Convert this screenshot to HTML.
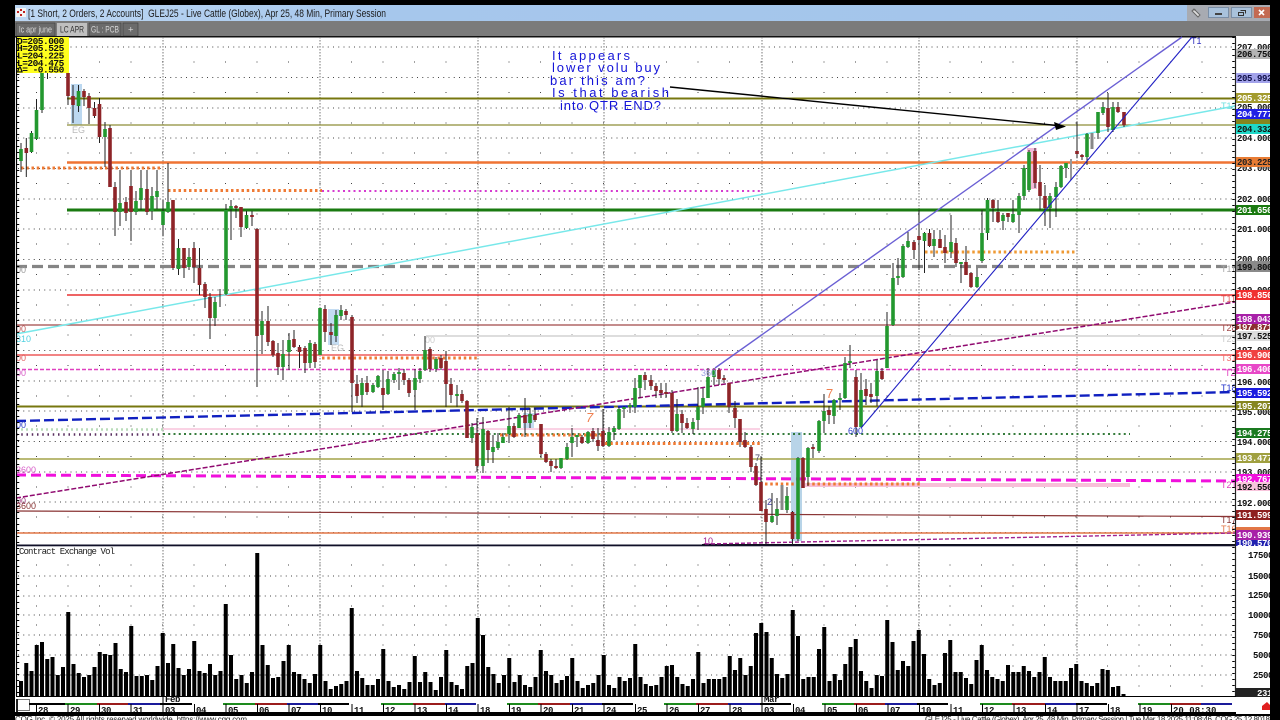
<!DOCTYPE html>
<html>
<head>
<meta charset="utf-8">
<title>GLEJ25 chart</title>
<style>
html,body{margin:0;padding:0;background:#000;width:1280px;height:720px;overflow:hidden}
svg{display:block;position:absolute;left:0;top:0}
text{white-space:pre}
.m{font:bold 9px "Liberation Mono",monospace;letter-spacing:-.4px}
.o{font:bold 9.5px "Liberation Mono",monospace;letter-spacing:-.5px}
.s{font:11px "Liberation Sans",sans-serif}
.t{font:9.5px "Liberation Sans",sans-serif}
.n{font:13px "Liberation Sans",sans-serif;fill:#1414d8}
</style>
</head>
<body>
<svg width="1280" height="720" viewBox="0 0 1280 720" xmlns="http://www.w3.org/2000/svg">
<defs>
<linearGradient id="tb" x1="0" x2="1" y1="0" y2="0"><stop offset="0" stop-color="#bdd7f3"/><stop offset="0.3" stop-color="#a6c7ec"/><stop offset="1" stop-color="#a3c4ea"/></linearGradient>
</defs>
<rect width="1280" height="720" fill="#000"/>
<!-- title bar -->
<rect x="15" y="5" width="1255" height="16" fill="url(#tb)"/>
<rect x="1187" y="5" width="83" height="16" fill="#a8abb2"/>
<rect x="16" y="8" width="10" height="9" fill="#f4f4f4"/>
<path d="M17 11h2v2h-2zM20 9h2v2h-2zM23 11h2v2h-2zM20 14h2v2h-2z" fill="#c02020"/>
<text class="s" x="28" y="17" fill="#1c1c1c" textLength="358" lengthAdjust="spacingAndGlyphs">[1 Short, 2 Orders, 2 Accounts]  GLEJ25 - Live Cattle (Globex), Apr 25, 48 Min, Primary Session</text>
<path d="M1194 9l6 6-2 2-6-6zM1193 10h3" stroke="#666" fill="#ddd"/>
<rect x="1208.5" y="7.5" width="20" height="10" fill="#a9c2dc" stroke="#7a8ea6"/><rect x="1215" y="13" width="7" height="2" fill="#444"/>
<rect x="1231.5" y="7.5" width="20" height="10" fill="#a9c2dc" stroke="#7a8ea6"/><path d="M1238.5 12.5h5v3h-5zM1240.5 10.5h5v3" fill="none" stroke="#333"/>
<rect x="1254" y="7" width="16" height="11" fill="#c36a52"/><path d="M1259 10l5 5M1264 10l-5 5" stroke="#fff" stroke-width="1.6"/>
<!-- tab bar -->
<rect x="15" y="21" width="1255" height="15" fill="#7b7b7b"/>
<rect x="16" y="23" width="39" height="13" fill="#6b6b6b" stroke="#333" stroke-width=".5"/>
<text class="t" x="19" y="32.5" fill="#d8d8d8" textLength="33" lengthAdjust="spacingAndGlyphs">lc apr june</text>
<rect x="57" y="23" width="30" height="13" fill="#bfbfbf"/>
<text class="t" x="60" y="32.5" fill="#333" textLength="24" lengthAdjust="spacingAndGlyphs">LC APR</text>
<rect x="89" y="23" width="32" height="13" fill="#6b6b6b" stroke="#333" stroke-width=".5"/>
<text class="t" x="91" y="32.5" fill="#d8d8d8" textLength="28" lengthAdjust="spacingAndGlyphs">GL : PCB</text>
<rect x="123" y="23" width="15" height="13" fill="#6b6b6b" stroke="#333" stroke-width=".5"/>
<text class="t" x="128" y="32.5" fill="#d8d8d8">+</text>
<!-- chart background -->
<rect x="15" y="36" width="1255" height="680" fill="#fff"/>
<rect x="15" y="36" width="1221" height="1.5" fill="#111"/>
<!-- grid -->
<g fill="none" stroke="#444" stroke-width="1">
<path stroke-dasharray="1 4.25" d="M18 47H1232M18 77.5H1232M18 108H1232M18 138H1232M18 168.5H1232M18 199H1232M18 229H1232M18 259.5H1232M18 290H1232M18 320H1232M18 350.5H1232M18 381H1232M18 411H1232M18 441.5H1232M18 472H1232M18 502H1232M18 532.5H1232M18 576H1232M18 596H1232M18 615H1232M18 635H1232M18 655H1232M18 675H1232"/>
<path stroke-dasharray="1 30.5" d="M36 62H1232M36 92.5H1232M36 123H1232M36 153H1232M36 183.5H1232M36 214H1232M36 244H1232M36 274.5H1232M36 305H1232M36 335H1232M36 365.5H1232M36 396H1232M36 426H1232M36 456.5H1232M36 487H1232M36 517H1232M36 565H1232M36 586H1232M36 606H1232M36 625H1232M36 645H1232M36 666H1232M36 686H1232"/>
<path stroke="#777" stroke-dasharray="1.5 1.5" d="M163 37V696M320 37V696M478 37V696M604 37V696M762 37V696M919 37V696M1077 37V696"/>
</g>
<!-- highlight boxes -->
<rect x="71" y="84" width="11" height="41" fill="#bcd8f0"/>
<rect x="328" y="309" width="11" height="36" fill="#c4dcf2"/>
<rect x="523" y="413" width="11" height="15" fill="#c4dcf2"/>
<rect x="791" y="432" width="11" height="109" fill="#b8d4e8"/>
<rect x="1027" y="148" width="10" height="41" fill="#f3b9d8"/>
<!-- level lines -->
<g fill="none">
<path d="M67 98.5H1235" stroke="#77770f" stroke-width="2"/>
<path d="M67 125H1235" stroke="#8e8e38" stroke-width="1.2"/>
<path d="M67 162.5H1235" stroke="#ef7434" stroke-width="2.4"/>
<path d="M67 210H1235" stroke="#1a7a10" stroke-width="3"/>
<path d="M16 266.5H1235" stroke="#858585" stroke-width="3.2" stroke-dasharray="11 5"/>
<path d="M67 295H1235" stroke="#e83030" stroke-width="1.5"/>
<path d="M16 325H1235" stroke="#a04848" stroke-width="1.2"/>
<path d="M426 336H1235" stroke="#dddddd" stroke-width="2"/>
<path d="M16 355H1235" stroke="#f28484" stroke-width="2"/>
<path d="M16 369.5H1235" stroke="#e040c0" stroke-width="1.6" stroke-dasharray="4 2"/>
<path d="M16 406.5H1235" stroke="#77770f" stroke-width="2"/>
<path d="M16 459H1235" stroke="#a4a448" stroke-width="1.6"/>
<path d="M16 429.5H163" stroke="#b8dcb8" stroke-width="2.5" stroke-dasharray="2 3"/>
<path d="M163 429H760" stroke="#f8c4dc" stroke-width="1.6"/>
<path d="M16 434.5H163" stroke="#5a3060" stroke-width="2.5" stroke-dasharray="1.5 3.75"/>
<path d="M163 434H1130" stroke="#1a6a20" stroke-width="1.8" stroke-dasharray="2 3.25"/>
<path d="M16 511L1235 516.5" stroke="#8a3535" stroke-width="1.2"/>
<path d="M16 533H1235" stroke="#e27646" stroke-width="1.6"/>
<path d="M702 544.5H1235" stroke="#111" stroke-width="1"/>
<path d="M805 485H1130" stroke="#f8c0d8" stroke-width="4"/>
<path d="M16 475L1235 481" stroke="#f010dc" stroke-width="3" stroke-dasharray="10 5"/>
<path d="M16 421L1235 392" stroke="#1020c0" stroke-width="2.4" stroke-dasharray="10 4"/>
<path d="M16 498L1235 302" stroke="#900a70" stroke-width="1.5" stroke-dasharray="5 2"/>
<path d="M16 334L1235 106" stroke="#78e8ea" stroke-width="1.5"/>
<path d="M705 544L1235 533" stroke="#a02090" stroke-width="1.4" stroke-dasharray="4 2"/>
<!-- orange/pink dotted -->
<path d="M21 168H163" stroke="#ef7a34" stroke-width="3" stroke-dasharray="2.5 2.75"/>
<path d="M168 190.5H322" stroke="#ef7a34" stroke-width="3" stroke-dasharray="2.5 2.75"/>
<path d="M322 191H760" stroke="#d63ad0" stroke-width="2" stroke-dasharray="2 3.25"/>
<path d="M322 358H478" stroke="#ef7a34" stroke-width="3" stroke-dasharray="2.5 2.75"/>
<path d="M500 435H605" stroke="#ef7a34" stroke-width="3" stroke-dasharray="2.5 2.75"/>
<path d="M605 443.5H762" stroke="#ef7a34" stroke-width="3" stroke-dasharray="2.5 2.75"/>
<path d="M765 484H920" stroke="#ef7a34" stroke-width="3" stroke-dasharray="2.5 2.75"/>
<path d="M925 252H1077" stroke="#ef9a34" stroke-width="3" stroke-dasharray="2.5 2.75"/>
<path d="M1077 162.5H1130" stroke="#ef8c50" stroke-width="3" stroke-dasharray="2.5 2.75"/>
</g>
<!-- candle wicks -->
<path fill="none" stroke="#222" stroke-width="1" d="M21 143V172M26.3 138V177M31.5 131V153M36.5 99V140M42 60V113M47.5 73V79M68 73V105M73 85V123M78.5 85V112M84 89V106M89 93V124M94.5 102V118M99.5 98V143M105 122V167M110 125V187M115 182V236M120 170V226M126 197V221M131 170V241M136 191V215M141 170V210M147 170V215M152 187V220M157 170V209M163 200V236M168 163V213M173 200V270M178.5 239V275M184 248V278M189 248V270M194 242V283M199.5 248V295M205 282V308M210 293V339M215 297V326M220 289V307M226 204V295M231 200V240M236 205V218M241 207V237M246.5 211V229M252 211V226M257 228V387M262 311V354M268 306V346M273 340V357M278 343V375M283 340V380M289 333V370M294 330V348M299.5 345V368M305 346V373M310 340V368M315 342V368M320 308V355M325 305V342M331 323V345M336 310V342M341 305V320M346 309V320M352 315V412M357 375V403M362 378V407M367 376V395M373 383V393M378 375V388M383 370V410M388 371V395M394 372V383M399 368V390M404 369V385M409 378V397M415 369V410M420 368V383M425 336V371M430 347V372M436 357V372M441 355V370M446 351V407M451 378V403M457 385V407M462 390V403M467 400V438M472 423V443M477 418V472M483 417V473M488 430V463M493 435V463M498 433V450M503 433V443M509 407V443M514 423V438M519 413V428M525 398V437M530 408V428M535 408V422M541 424V458M546 452V463M551 459V472M556 459V469M561 458V469M567 443V460M572 428V457M577 435V447M582 435V444M588 431V444M593 428V442M598 428V451M603 409V447M609 427V447M614 426V440M619 407V430M624 406V418M630 403V413M635 378V413M640 375V398M645 372V390M651 375V390M656 383V398M661 383V398M666 383V398M672 390V433M677 399V432M682 410V433M687 418V429M693 418V434M698 387V430M703 388V414M708 368V398M714 368V385M719 368V385M724 375V383M729 383V413M735 401V428M740 419V447M745 432V448M751 445V472M756 463V486M761 457V511M766 500V545M772 493V523M777 498V525M782 485V510M787 487V513M792.5 511V545M798 457V541M803 457V488M808 447V486M813 444V458M819 420V453M824 394V433M829 406V424M834 399V424M840 393V410M845 357V399M850 345V368M856 370V437M861 373V427M866 379V405M871 383V403M877 360V406M882 368V380M887 312V368M893 263V326M898 258V285M903 244V278M908 232V248M914 240V259M919 210V270M924.5 232V273M929.5 229V247M934 230V257M940 230V248M945 235V263M951 215V258M956 238V267M961 262V283M966 246V275M971 272V288M977 268V288M982 210V263M987.5 198V240M993 199V222M998 200V223M1003 213V230M1008 213V222M1013 200V223M1019 193V233M1024 165V200M1029 150V192M1035 148V188M1040 165V210M1045 185V226M1050 193V228M1056 182V217M1061 165V188M1066 163V178M1071 159V180M1077 122V158M1082 154V160M1087 133V165M1092 133V149M1098 112V139M1103 102V115M1108 93V132M1113 102V132M1118 102V113M1124 112V127"/>
<!-- green bodies -->
<path fill="none" stroke="#23982f" stroke-width="3.6" d="M21 149V161M31.5 133V152M36.5 110V139M42 73V110M78.5 91V106M105 129V137M120 203V212M136 201V212M141 188V200M152 196V211M157 191V197M163 211V225M168 202V212M178.5 248V269M189 257V267M215 302V318M226 210V294M231 206V209M246.5 215V228M262 321V335M283 354V367M289 340V352M310 343V363M320 308V355M336 315V336M341 310V316M362 383V395M373 385V392M378 376V387M388 379V394M394 374V380M399 372V374M415 378V390M420 371V379M425 350V370M436 359V369M457 394V396M472 427V438M483 429V466M493 447V452M498 442V448M503 437V443M509 426V434M519 415V428M530 414V423M561 458V468M567 447V459M572 437V443M577 435V437M588 432V443M609 432V446M614 428V432M619 409V429M624 407V409M630 405V407M635 388V407M640 375V388M677 414V431M693 422V429M698 407V420M703 398V407M708 377V398M714 370V377M772 516V522M777 509V516M787 496V510M798 458V539M808 448V477M819 421V451M824 411V421M834 400V416M840 398V400M845 363V398M850 361V363M861 390V427M877 371V396M887 326V368M893 278V325M898 276V278M903 246V277M908 241V247M924.5 233V241M934 239V246M951 242V252M961 262V264M977 277V287M982 233V261M987.5 200V233M1003 215V221M1013 214V222M1019 196V215M1024 168V196M1029 152V190M1050 196V208M1056 187V197M1061 166V187M1066 163V168M1087 134V157M1098 112V133M1103 107V113M1113 107V130"/>
<!-- red bodies -->
<path fill="none" stroke="#8e2428" stroke-width="3.6" d="M26.3 148V153M68 73V96M73 96V105M84 91V97M89 96V108M94.5 108V116M99.5 104V137M110 128V187M115 187V212M126 202V213M131 186V212M147 189V212M173 200V268M184 248V268M194 248V267M199.5 268V285M205 284V297M210 297V318M236 206V208M241 207V227M252 215V217M257 229V336M268 321V342M273 341V355M278 353V367M294 339V347M299.5 347V352M305 348V363M315 344V362M325 309V332M331 332V335M346 311V315M352 317V383M357 384V396M367 383V392M383 388V395M404 373V380M409 380V393M430 349V369M441 358V368M446 361V384M451 384V395M462 394V401M467 401V438M477 433V466M488 431V450M514 426V437M525 415V423M535 415V420M541 424V454M546 454V462M551 461V466M556 466V468M582 437V443M593 431V439M598 440V446M603 431V446M645 375V380M651 380V386M656 386V391M661 390V393M666 392V394M672 393V431M682 414V423M687 423V428M719 370V379M724 378V380M729 383V407M735 408V418M740 419V442M745 440V447M751 447V467M756 466V485M761 482V511M766 509V522M792.5 512V539M803 458V488M813 447V449M829 410V415M856 377V427M866 389V396M871 394V397M882 371V379M914 242V250M919 236V240M929.5 233V246M940 239V248M945 247V253M956 243V263M966 262V275M971 273V287M993 200V208M998 212V222M1008 213V217M1035 151V183M1040 182V196M1045 196V208M1077 151V154M1082 155V157M1108 108V127M1118 107V112M1124 112V125"/>
<path d="M782 485V510" stroke="#888" stroke-width="3"/>
<path d="M1092 133V149" stroke="#888" stroke-width="3"/>
<path d="M1071 159V180" stroke="#999" stroke-width="2"/>
<!-- trend lines and arrow -->
<path d="M715 368L1182 37" stroke="#6a5fd4" stroke-width="1.4" fill="none"/>
<path d="M861 428L1192 37" stroke="#2020c4" stroke-width="1.1" fill="none"/>
<path d="M670 87L1062 126" stroke="#000" stroke-width="1.4" fill="none"/>
<path d="M1066 126.5L1054 122L1056 130Z" fill="#000"/>
<!-- annotation -->
<text class="n" x="552" y="60" textLength="78">It appears</text>
<text class="n" x="552" y="72" textLength="108">lower volu buy</text>
<text class="n" x="550" y="85" textLength="95">bar this am?</text>
<text class="n" x="552" y="97" textLength="117">Is that bearish</text>
<text class="n" x="560" y="110" textLength="101">into QTR END?</text>
<!-- small chart labels -->
<g font-family="Liberation Sans,sans-serif" font-size="9">
<text x="72" y="133" fill="#bbb">EG</text>
<text x="331" y="351" fill="#bbb">EG</text>
<text x="425" y="343" fill="#ccc">00</text>
<text x="1191" y="44" fill="#3030c0">T1</text>
<text x="1221" y="109" fill="#70e0e0">T13</text>
<text x="1221" y="272" fill="#aaa">T11</text>
<text x="1221" y="302" fill="#e06060">T11</text>
<text x="1221" y="331" fill="#a04848">T28</text>
<text x="1221" y="342" fill="#ccc">T23</text>
<text x="1221" y="361" fill="#f07070">T31</text>
<text x="1225" y="376" fill="#e040c0">T2</text>
<text x="1221" y="391" fill="#2030c8">T18</text>
<text x="1221" y="488" fill="#e040c0">T21</text>
<text x="1221" y="523" fill="#8a3535">T17</text>
<text x="1221" y="532" fill="#e27646">T16</text>
<text x="16" y="273" fill="#999">00</text>
<text x="16" y="332" fill="#c06060">00</text>
<text x="16" y="342" fill="#50d0e0">310</text>
<text x="16" y="361" fill="#e06060">00</text>
<text x="16" y="376" fill="#d860c8">00</text>
<text x="16" y="428" fill="#3040c8">00</text>
<text x="16" y="473" fill="#d860c8">3600</text>
<text x="16" y="504" fill="#a04080">00</text>
<text x="16" y="509" fill="#8a3535">3600</text>
<text x="701" y="376" fill="#9aa0e0">360</text>
<text x="848" y="434" fill="#3040c8">600</text>
<text x="703" y="544" fill="#a02090">10</text>
<text x="755" y="461" fill="#446">7</text>
<text x="767" y="505" fill="#44a">2</text>
</g>
<text x="826" y="398" font-family="Liberation Sans,sans-serif" font-size="13" fill="#f08050">7</text>
<text x="586" y="422" font-family="Liberation Sans,sans-serif" font-size="13" fill="#f08050" font-style="italic">7</text>
<!-- OHLC box -->
<rect x="16" y="37" width="53" height="36" fill="#ffff1e"/>
<text class="o" x="17" y="44" fill="#111">O=205.000</text>
<text class="o" x="17" y="51" fill="#111">H=205.525</text>
<text class="o" x="17" y="58.5" fill="#111">L=204.225</text>
<text class="o" x="17" y="66" fill="#111">L=204.475</text>
<text class="o" x="17" y="72.5" fill="#111">&#916;= -0.550</text>
<!-- volume pane -->
<rect x="16" y="544.5" width="1220" height="1.8" fill="#101028"/>
<text x="19" y="554" fill="#222" font-family="Liberation Mono,monospace" font-size="9" textLength="96">Contract Exchange Vol</text>
<path fill="none" stroke="#000" stroke-width="4" d="M21 696v-15m5.25 15v-33m5.25 33v-25m5.25 25v-51m5.25 51v-54m5.25 54v-37m5.25 37v-39m5.25 39v-21m5.25 21v-29m5.25 29v-84m5.25 84v-32m5.25 32v-23m5.25 23v-19m5.25 19v-21m5.25 21v-29m5.25 29v-44m5.25 44v-42m5.25 42v-41m5.25 41v-53m5.25 53v-27m5.25 27v-24m5.25 24v-70m5.25 70v-20m5.25 20v-20m5.25 20v-21m5.25 21v-16m5.25 16v-30m5.25 30v-63m5.25 63v-33m5.25 33v-52m5.25 52v-28m5.25 28v-21m5.25 21v-27m5.25 27v-55m5.25 55v-25m5.25 25v-23m5.25 23v-32m5.25 32v-21m5.25 21v-25m5.25 25v-92m5.25 92v-41m5.25 41v-17m5.25 17v-21m5.25 21v-13m5.25 13v-24m5.25 24v-143m5.25 143v-51m5.25 51v-31m5.25 31v-18m5.25 18v-19m5.25 19v-35m5.25 35v-51m5.25 51v-24m5.25 24v-22m5.25 22v-17m5.25 17v-13m5.25 13v-22m5.25 22v-51m5.25 51v-15m5.25 15v-7m5.25 7v-10m5.25 10v-12m5.25 12v-15m5.25 15v-88m5.25 88v-25m5.25 25v-18m5.25 18v-11m5.25 11v-11m5.25 11v-17m5.25 17v-47m5.25 47v-15m5.25 15v-9m5.25 9v-11m5.25 11v-7m5.25 7v-14m5.25 14v-40m5.25 40v-14m5.25 14v-24m5.25 24v-14m5.25 14v-6m5.25 6v-19m5.25 19v-46m5.25 46v-14m5.25 14v-11m5.25 11v-7m5.25 7v-30m5.25 30v-33m5.25 33v-78m5.25 78v-61m5.25 61v-29m5.25 29v-22m5.25 22v-13m5.25 13v-21m5.25 21v-38m5.25 38v-14m5.25 14v-21m5.25 21v-11m5.25 11v-9m5.25 9v-19m5.25 19v-46m5.25 46v-25m5.25 25v-21m5.25 21v-13m5.25 13v-16m5.25 16v-20m5.25 20v-38m5.25 38v-15m5.25 15v-8m5.25 8v-11m5.25 11v-13m5.25 13v-21m5.25 21v-41m5.25 41v-11m5.25 11v-8m5.25 8v-19m5.25 19v-15m5.25 15v-18m5.25 18v-52m5.25 52v-19m5.25 19v-12m5.25 12v-10m5.25 10v-11m5.25 11v-19m5.25 19v-30m5.25 30v-31m5.25 31v-19m5.25 19v-12m5.25 12v-10m5.25 10v-17m5.25 17v-44m5.25 44v-13m5.25 13v-17m5.25 17v-17m5.25 17v-17m5.25 17v-19m5.25 19v-40m5.25 40v-26m5.25 26v-38m5.25 38v-21m5.25 21v-30m5.25 30v-63m5.25 63v-73m5.25 73v-64m5.25 64v-38m5.25 38v-22m5.25 22v-18m5.25 18v-22m5.25 22v-86m5.25 86v-60m5.25 60v-17m5.25 17v-19m5.25 19v-19m5.25 19v-47m5.25 47v-69m5.25 69v-15m5.25 15v-22m5.25 22v-16m5.25 16v-32m5.25 32v-49m5.25 49v-57m5.25 57v-25m5.25 25v-15m5.25 15v-8m5.25 8v-21m5.25 21v-20m5.25 20v-76m5.25 76v-54m5.25 54v-26m5.25 26v-35m5.25 35v-30m5.25 30v-55m5.25 55v-66m5.25 66v-42m5.25 42v-17m5.25 17v-11m5.25 11v-13m5.25 13v-43m5.25 43v-56m5.25 56v-24m5.25 24v-24m5.25 24v-18m5.25 18v-12m5.25 12v-36m5.25 36v-51m5.25 51v-26m5.25 26v-19m5.25 19v-17m5.25 17v-15m5.25 15v-31m5.25 31v-24m5.25 24v-24m5.25 24v-30m5.25 30v-25m5.25 25v-19m5.25 19v-24m5.25 24v-39m5.25 39v-19m5.25 19v-15m5.25 15v-15m5.25 15v-15m5.25 15v-28m5.25 28v-32m5.25 32v-15m5.25 15v-13m5.25 13v-10m5.25 10v-13m5.25 13v-27m5.25 27v-26m5.25 26v-9m5.25 9v-10m5.25 10v-2"/>
<rect x="16" y="696" width="1220" height="1" fill="#000"/>
<!-- time axis -->
<rect x="16" y="697" width="1220" height="16" fill="#fff"/>
<rect x="16.5" y="699.5" width="13" height="11" fill="#fff" stroke="#777"/>
<rect x="16" y="699" width="2" height="13" fill="#222"/>
<g>
<rect x="29" y="703" width="36" height="2" fill="#000"/>
<rect x="65" y="703" width="32" height="2" fill="#1d8a1d"/><rect x="97" y="703" width="31" height="2" fill="#9a1c1c"/><rect x="128" y="703" width="32" height="2" fill="#1a1a9a"/><rect x="160" y="703" width="32" height="2" fill="#000"/>
<rect x="223" y="703" width="32" height="2" fill="#1d8a1d"/><rect x="255" y="703" width="32" height="2" fill="#9a1c1c"/><rect x="287" y="703" width="31" height="2" fill="#1a1a9a"/><rect x="318" y="703" width="31" height="2" fill="#000"/>
<rect x="381" y="703" width="32" height="2" fill="#1d8a1d"/><rect x="413" y="703" width="32" height="2" fill="#9a1c1c"/><rect x="445" y="703" width="31" height="2" fill="#1a1a9a"/>
<rect x="507" y="703" width="31" height="2" fill="#1d8a1d"/><rect x="538" y="703" width="32" height="2" fill="#9a1c1c"/><rect x="570" y="703" width="32" height="2" fill="#1a1a9a"/><rect x="602" y="703" width="31" height="2" fill="#000"/>
<rect x="664" y="703" width="32" height="2" fill="#1d8a1d"/><rect x="696" y="703" width="32" height="2" fill="#9a1c1c"/><rect x="728" y="703" width="32" height="2" fill="#1a1a9a"/><rect x="760" y="703" width="31" height="2" fill="#000"/>
<rect x="822" y="703" width="32" height="2" fill="#1d8a1d"/><rect x="854" y="703" width="31" height="2" fill="#9a1c1c"/><rect x="885" y="703" width="32" height="2" fill="#1a1a9a"/><rect x="917" y="703" width="31" height="2" fill="#000"/>
<rect x="980" y="703" width="32" height="2" fill="#1d8a1d"/><rect x="1012" y="703" width="33" height="2" fill="#9a1c1c"/><rect x="1045" y="703" width="31" height="2" fill="#1a1a9a"/><rect x="1076" y="703" width="31" height="2" fill="#000"/>
<rect x="1138" y="703" width="32" height="2" fill="#1d8a1d"/><rect x="1170" y="703" width="31" height="2" fill="#9a1c1c"/><rect x="1201" y="703" width="31" height="2" fill="#1a1a9a"/>
</g>
<path stroke="#000" stroke-width="1" fill="none" d="M36.5 704V713M68 704V713M99.5 704V713M131 704V713M163 696V713M194.5 704V713M226 704V713M257.5 704V713M289 704V713M320.5 704V713M352 704V713M383.5 704V713M415 704V713M446.5 704V713M478 704V713M509.5 704V713M541 704V713M572.5 704V713M604 704V713M635.5 704V713M667 704V713M698.5 704V713M730 704V713M762 696V713M793.5 704V713M825 704V713M856.5 704V713M888 704V713M919.5 704V713M951 704V713M982.5 704V713M1014 704V713M1045.5 704V713M1077 704V713M1108.5 704V713M1140 704V713M1171.5 704V713"/>
<g fill="#111">
<text class="m" x="38" y="713">28</text><text class="m" x="70" y="713">29</text><text class="m" x="101" y="713">30</text><text class="m" x="133" y="713">31</text><text class="m" x="165" y="713">03</text><text class="m" x="196" y="713">04</text><text class="m" x="228" y="713">05</text><text class="m" x="259" y="713">06</text><text class="m" x="291" y="713">07</text><text class="m" x="322" y="713">10</text><text class="m" x="354" y="713">11</text><text class="m" x="385" y="713">12</text><text class="m" x="417" y="713">13</text><text class="m" x="448" y="713">14</text><text class="m" x="480" y="713">18</text><text class="m" x="511" y="713">19</text><text class="m" x="543" y="713">20</text><text class="m" x="574" y="713">21</text><text class="m" x="606" y="713">24</text><text class="m" x="637" y="713">25</text><text class="m" x="669" y="713">26</text><text class="m" x="700" y="713">27</text><text class="m" x="732" y="713">28</text><text class="m" x="764" y="713">03</text><text class="m" x="795" y="713">04</text><text class="m" x="827" y="713">05</text><text class="m" x="858" y="713">06</text><text class="m" x="890" y="713">07</text><text class="m" x="921" y="713">10</text><text class="m" x="953" y="713">11</text><text class="m" x="984" y="713">12</text><text class="m" x="1016" y="713">13</text><text class="m" x="1047" y="713">14</text><text class="m" x="1079" y="713">17</text><text class="m" x="1110" y="713">18</text><text class="m" x="1142" y="713">19</text><text class="m" x="1173" y="713" textLength="43">20 08:30</text>
<text class="m" x="165" y="702">Feb</text><text class="m" x="764" y="702">Mar</text>
</g>
<!-- footer -->
<rect x="15" y="712" width="1221" height="4" fill="#000"/>
<rect x="1236" y="714" width="34" height="2" fill="#000"/>
<rect x="15" y="716" width="1255" height="4" fill="#fff"/>
<text x="15" y="722" font-family="Liberation Sans,sans-serif" font-size="8" fill="#222" textLength="232">CQG Inc. &#169; 2025 All rights reserved worldwide. https://www.cqg.com</text>
<text x="925" y="722" font-family="Liberation Sans,sans-serif" font-size="8" fill="#222" textLength="345">GLEJ25 - Live Cattle (Globex), Apr 25, 48 Min, Primary Session | Tue Mar 18 2025 11:08:46, CQG 25.12.8018</text>
<!-- axes -->
<path d="M16.5 37V696" stroke="#000" stroke-width="1.2"/>
<path d="M18 38V696" stroke="#000" stroke-width="2.5" stroke-dasharray="1 5"/>
<path d="M1235.5 37V696" stroke="#222" stroke-width="1.2"/>
<path d="M1233.5 37V696" stroke="#000" stroke-width="2.5" stroke-dasharray="1 5"/>
<!-- price axis -->
<g fill="#111">
<text class="m" x="1237" y="50">207.000</text>
<text class="m" x="1237" y="110">205.000</text>
<text class="m" x="1237" y="141">204.000</text>
<text class="m" x="1237" y="171">203.000</text>
<text class="m" x="1237" y="202">202.000</text>
<text class="m" x="1237" y="232">201.000</text>
<text class="m" x="1237" y="262">200.000</text>
<text class="m" x="1237" y="293">199.000</text>
<text class="m" x="1237" y="353">197.000</text>
<text class="m" x="1237" y="385">196.000</text>
<text class="m" x="1237" y="415">195.000</text>
<text class="m" x="1237" y="445">194.000</text>
<text class="m" x="1237" y="475">193.000</text>
<text class="m" x="1237" y="506">192.000</text>
</g>
<rect x="1236" y="49" width="34" height="10" fill="#b4b4b4"/><text class="m" x="1237" y="57" fill="#111">206.750</text>
<rect x="1236" y="73" width="34" height="10" fill="#a2a2ea"/><text class="m" x="1237" y="81" fill="#10104a">205.992</text>
<rect x="1236" y="93" width="34" height="10" fill="#a39b2e"/><text class="m" x="1237" y="101" fill="#fff">205.325</text>
<rect x="1236" y="109" width="34" height="10" fill="#2020e4"/><text class="m" x="1237" y="117" fill="#fff">204.777</text>
<rect x="1236" y="119" width="34" height="6" fill="#85851e"/>
<rect x="1236" y="124" width="34" height="10" fill="#1fd8c8"/><text class="m" x="1237" y="132" fill="#111">204.332</text>
<rect x="1236" y="157" width="34" height="10" fill="#e87c34"/><text class="m" x="1237" y="165" fill="#222">203.225</text>
<rect x="1236" y="205" width="34" height="10" fill="#1a7a10"/><text class="m" x="1237" y="213" fill="#fff">201.650</text>
<rect x="1236" y="261" width="34" height="11" fill="#8a8a8a"/><text class="m" x="1237" y="270" fill="#111">199.800</text>
<rect x="1236" y="290" width="34" height="10" fill="#f03030"/><text class="m" x="1237" y="298" fill="#fff">198.850</text>
<rect x="1236" y="314" width="34" height="10" fill="#a820a8"/><text class="m" x="1237" y="322" fill="#fff">198.043</text>
<rect x="1236" y="324" width="34" height="6" fill="#8c3030"/><text class="m" x="1237" y="330" fill="#fff">197.871</text>
<rect x="1236" y="331" width="34" height="10" fill="#dcdcdc"/><text class="m" x="1237" y="339" fill="#111">197.525</text>
<rect x="1236" y="350" width="34" height="10" fill="#f04040"/><text class="m" x="1237" y="358" fill="#fff">196.900</text>
<rect x="1236" y="364" width="34" height="10" fill="#e848c8"/><text class="m" x="1237" y="372" fill="#fff">196.400</text>
<rect x="1236" y="388" width="34" height="10" fill="#1a1ae0"/><text class="m" x="1237" y="396" fill="#fff">195.592</text>
<rect x="1236" y="401" width="34" height="9" fill="#85851e"/><text class="m" x="1237" y="409" fill="#fff">195.207</text>
<rect x="1236" y="428" width="34" height="10" fill="#1a7a20"/><text class="m" x="1237" y="436" fill="#fff">194.275</text>
<rect x="1236" y="453" width="34" height="10" fill="#a0a040"/><text class="m" x="1237" y="461" fill="#fff">193.477</text>
<rect x="1236" y="474" width="34" height="10" fill="#f010dc"/><text class="m" x="1237" y="482" fill="#fff">192.767</text>
<rect x="1236" y="482" width="34" height="9" fill="#f8c4dc"/><text class="m" x="1237" y="490" fill="#111">192.550</text>
<rect x="1236" y="510" width="34" height="10" fill="#8e2020"/><text class="m" x="1237" y="518" fill="#fff">191.599</text>
<rect x="1236" y="527" width="34" height="4" fill="#e27646"/>
<rect x="1236" y="530" width="34" height="10" fill="#a820a8"/><text class="m" x="1237" y="538" fill="#fff">190.939</text>
<rect x="1236" y="540" width="34" height="6" fill="#2020b0"/><text class="m" x="1237" y="546" fill="#fff">190.570</text>
<!-- volume axis -->
<g fill="#111">
<text class="m" x="1248" y="558">17500</text>
<text class="m" x="1248" y="579">15000</text>
<text class="m" x="1248" y="598">12500</text>
<text class="m" x="1248" y="618">10000</text>
<text class="m" x="1253" y="638">7500</text>
<text class="m" x="1253" y="658">5000</text>
<text class="m" x="1253" y="678">2500</text>
</g>
<rect x="1236" y="688" width="34" height="9" fill="#222"/>
<text class="m" x="1257" y="696" fill="#fff">231</text>
<path d="M1262 706L1267 702L1270 705V710H1262Z" fill="#e02020"/>
<!-- outer frame -->
<rect x="0" y="0" width="15" height="720" fill="#000"/>
<rect x="1270" y="0" width="10" height="720" fill="#000"/>
<rect x="0" y="0" width="1280" height="5" fill="#000"/>
</svg>
</body>
</html>
